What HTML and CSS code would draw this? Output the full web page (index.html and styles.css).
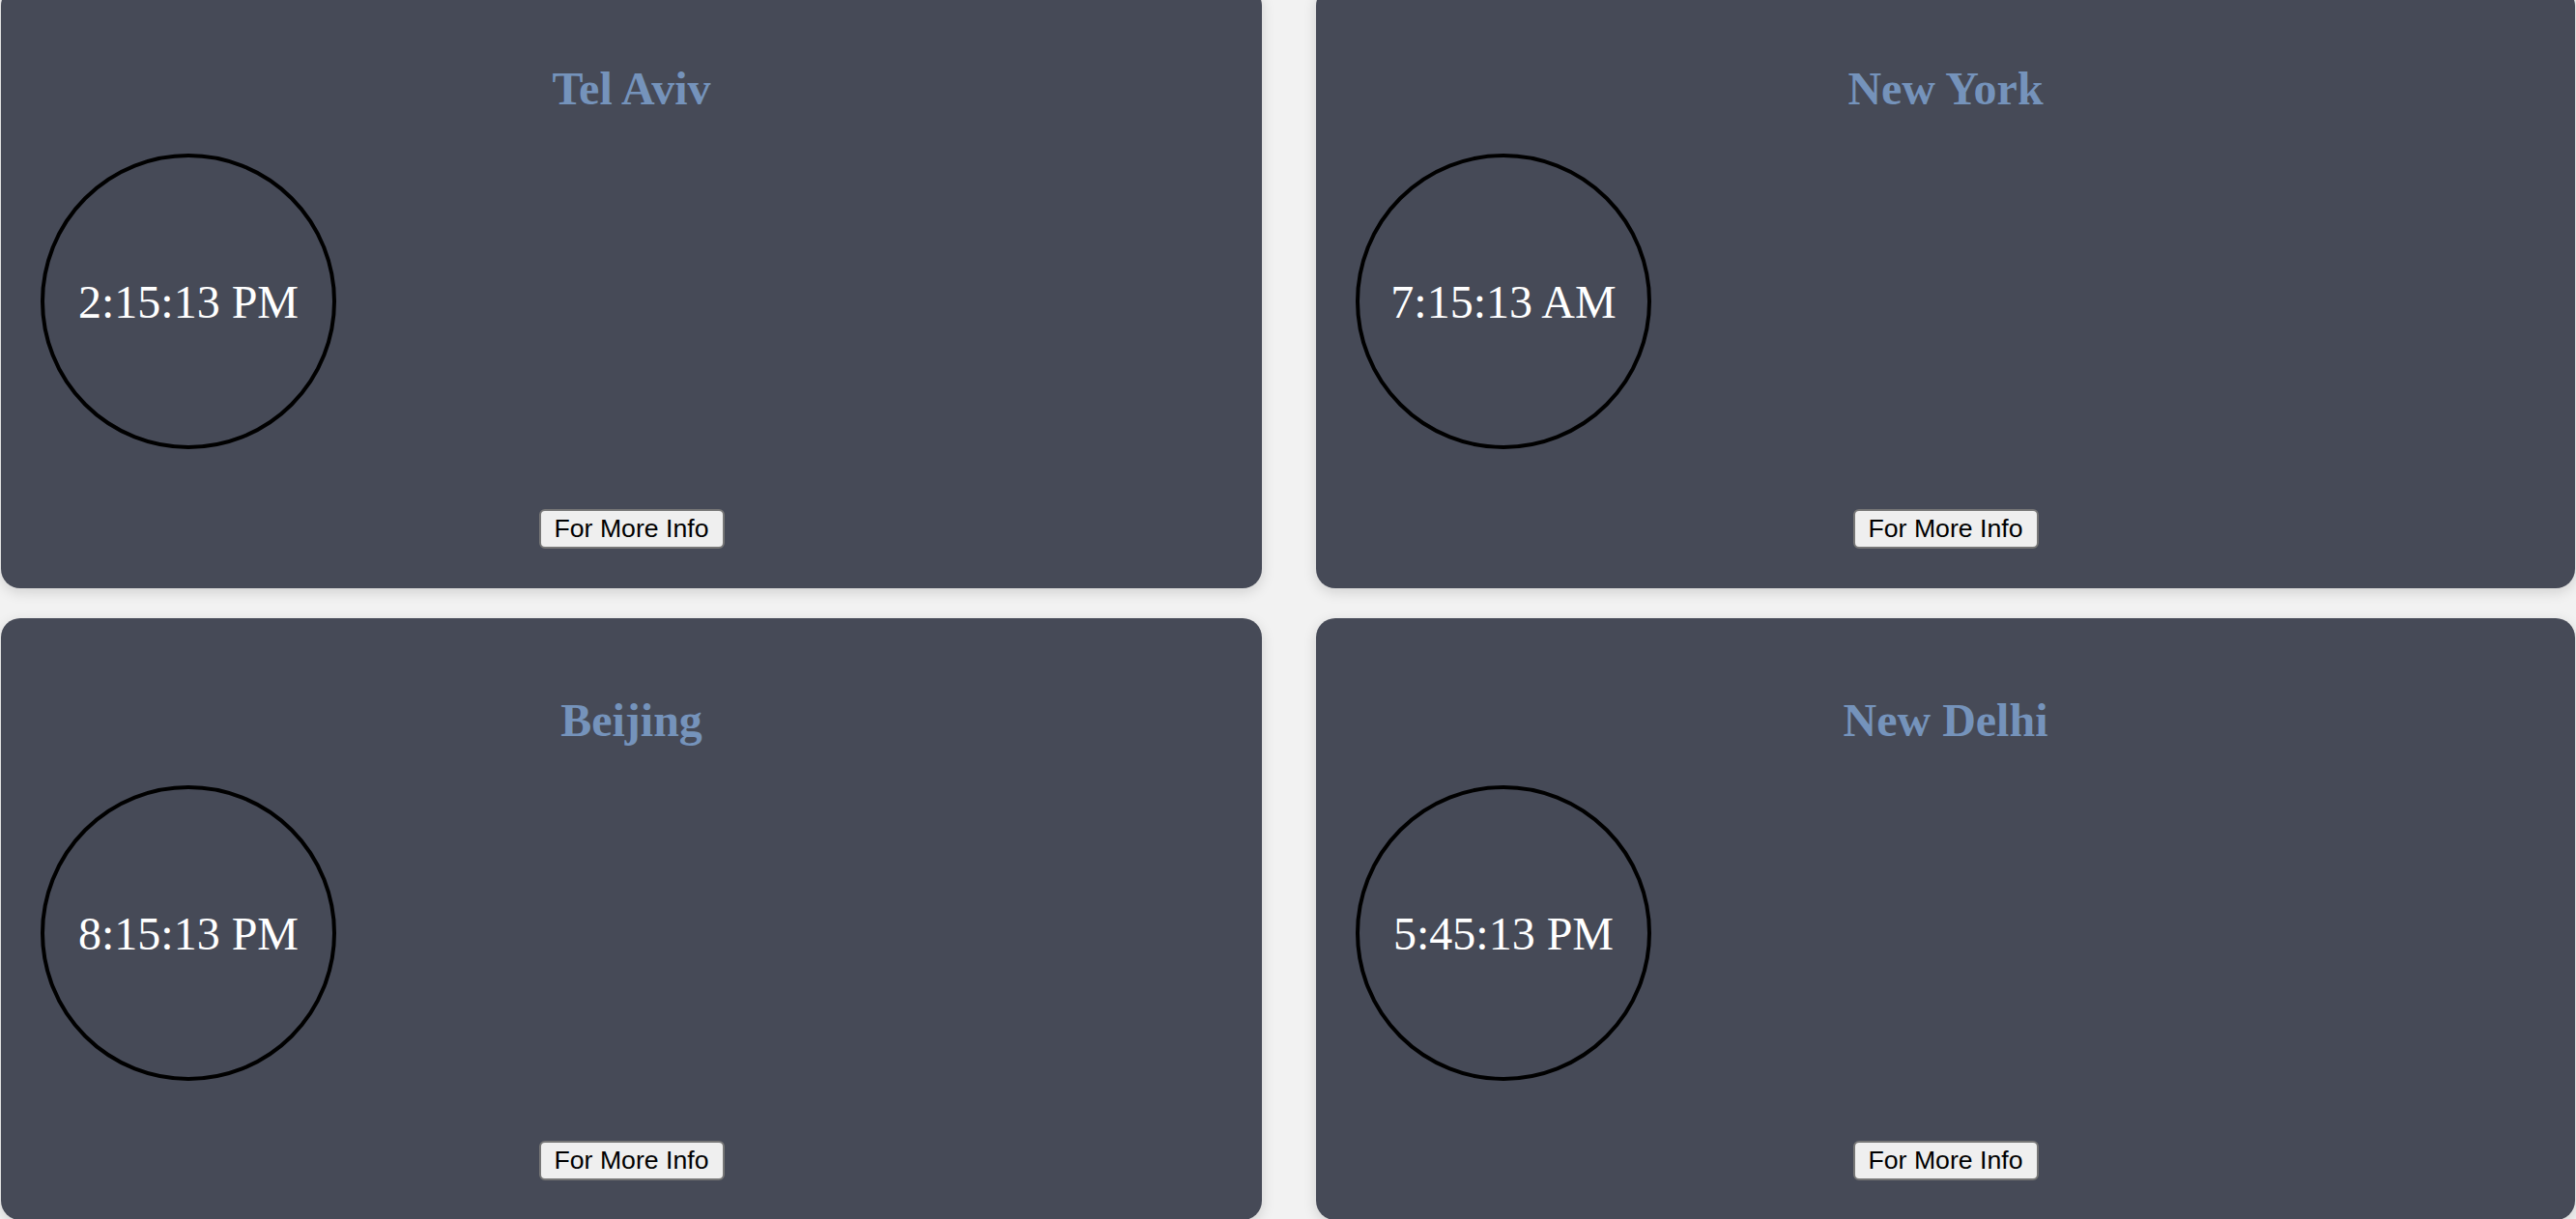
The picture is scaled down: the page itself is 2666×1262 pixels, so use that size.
FILE: index.html
```html
<!DOCTYPE html>
<html lang="en">
<head>
<meta charset="utf-8">
<title>World Clocks</title>
<link rel="stylesheet" href="styles.css">
</head>
<body>
<main class="grid">
  <section class="card">
    <h2 class="city">Tel Aviv</h2>
    <div class="clock">2:15:13 PM</div>
    <button class="more" type="button">For More Info</button>
  </section>
  <section class="card">
    <h2 class="city">New York</h2>
    <div class="clock">7:15:13 AM</div>
    <button class="more" type="button">For More Info</button>
  </section>
  <section class="card">
    <h2 class="city">Beijing</h2>
    <div class="clock">8:15:13 PM</div>
    <button class="more" type="button">For More Info</button>
  </section>
  <section class="card">
    <h2 class="city">New Delhi</h2>
    <div class="clock">5:45:13 PM</div>
    <button class="more" type="button">For More Info</button>
  </section>
</main>
</body>
</html>
```

FILE: styles.css
```css
html, body {
  margin: 0;
  padding: 0;
}

body {
  background: #f2f2f2;
  overflow: hidden;
  font-family: "Liberation Serif", "Times New Roman", serif;
}

.grid {
  display: grid;
  grid-template-columns: 1305px 1303px;
  column-gap: 56px;
  row-gap: 31px;
  margin-top: -14px;
  padding-left: 1px;
}

.card {
  box-sizing: border-box;
  height: 623px;
  background: #464a57;
  border-radius: 20px;
  box-shadow: 0 4px 14px rgba(0, 0, 0, 0.14);
  display: flex;
  flex-direction: column;
  padding-top: 78px;
}

.city {
  margin: 0;
  text-align: center;
  font-family: "Liberation Serif", "Times New Roman", serif;
  font-weight: 700;
  font-size: 48px;
  line-height: 55px;
  color: #7593bb;
}

.clock {
  margin-top: 40px;
  margin-left: 41px;
  width: 298px;
  height: 298px;
  border: 4px solid #000;
  border-radius: 50%;
  display: flex;
  align-items: center;
  justify-content: center;
  color: #ffffff;
  font-family: "Liberation Serif", "Times New Roman", serif;
  font-size: 48px;
  line-height: 55px;
}

.more {
  align-self: center;
  margin-top: 62px;
  padding: 3px 14px;
  font-family: "Liberation Sans", Arial, sans-serif;
  font-size: 26.67px;
  line-height: 31px;
  color: #000;
  background: #efefef;
  border: 2px solid #767676;
  border-radius: 6px;
}
```
